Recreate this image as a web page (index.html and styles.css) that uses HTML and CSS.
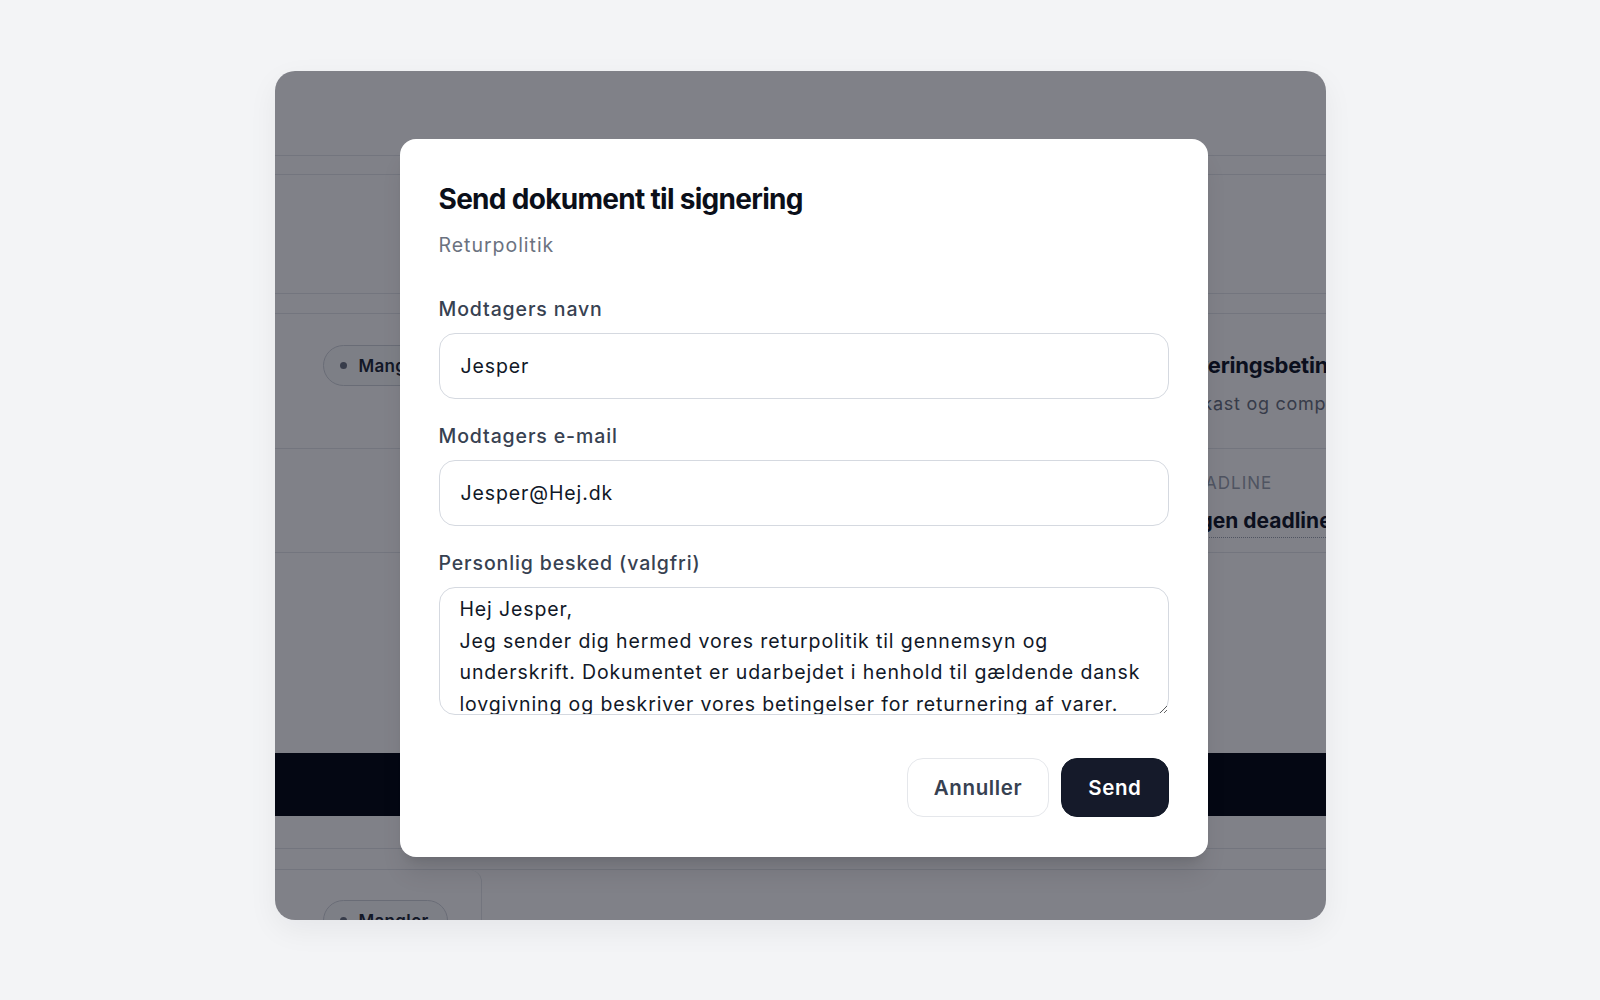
FILE: index.html
```html
<!DOCTYPE html>
<html lang="da">
<head>
  <meta charset="UTF-8" />
  <meta name="viewport" content="width=device-width, initial-scale=1.0"/>
  <title>Send dokument til signering</title>
  <link rel="stylesheet" href="styles.css">
</head>
<body>
  <div class="frame">
    <!-- siden bag dialogen -->
    <div class="app">
      <div class="app-head"></div>
      <div class="app-tabs"></div>
      <div class="app-gap"></div>
      <div class="app-strip"></div>

      <section class="doc-row">
        <span class="pill"><i class="dot"></i>Mangler</span>
        <div class="doc-info">
          <h3>Leveringsbetingelser</h3>
          <p>Udkast og compliance</p>
        </div>
      </section>

      <section class="doc-meta">
        <div class="meta-col">
          <span class="meta-label">Deadline</span>
          <span class="meta-value">Ingen deadline</span>
        </div>
      </section>

      <div class="app-space"></div>
      <div class="app-bar"></div>
      <div class="app-space small"></div>
      <div class="app-strip thin"></div>

      <div class="doc-card">
        <span class="pill"><i class="dot"></i>Mangler</span>
      </div>
    </div>

    <!-- MODAL -->
    <div class="overlay">
      <form class="dialog" onsubmit="return false">
        <h2>Send dokument til signering</h2>
        <p class="sub">Returpolitik</p>

        <label class="field">
          <span>Modtagers navn</span>
          <input type="text" value="Jesper">
        </label>

        <label class="field">
          <span>Modtagers e-mail</span>
          <input type="email" value="Jesper@Hej.dk">
        </label>

        <label class="field">
          <span>Personlig besked (valgfri)</span>
          <textarea>Hej Jesper,
Jeg sender dig hermed vores returpolitik til gennemsyn og underskrift. Dokumentet er udarbejdet i henhold til gældende dansk lovgivning og beskriver vores betingelser for returnering af varer.

Med venlig hilsen</textarea>
        </label>

        <div class="actions">
          <button type="button" class="btn ghost">Annuller</button>
          <button type="submit" class="btn dark">Send</button>
        </div>
      </form>
    </div>
  </div>
</body>
</html>
```

FILE: styles.css
```css
* {
  box-sizing: border-box;
}

body {
  margin: 0;
  height: 100vh;
  background: #f3f4f6;
  font-family: Inter, "Noto Sans", sans-serif;
  color: #111827;
}

.frame {
  position: relative;
  width: 1051px;
  height: 849px;
  margin: 71px auto 0;
  border-radius: 20px;
  overflow: hidden;
  background: #fff;
  box-shadow: 0 10px 30px rgba(15, 23, 42, 0.06);
}

/* siden under overlayet */
.app-head {
  height: 85px;
  border-bottom: 1px solid #e5e7eb;
}

.app-tabs {
  height: 19px;
  border-bottom: 1px solid #e5e7eb;
}

.app-gap {
  height: 119px;
  border-bottom: 1px solid #e5e7eb;
}

.app-strip {
  height: 20px;
  border-bottom: 1px solid #e5e7eb;
}

.app-strip.thin {
  height: 21px;
}

.doc-row {
  height: 135px;
  display: grid;
  grid-template-columns: 848px 1fr;
  padding: 31px 0 0 48px;
  border-bottom: 1px solid #e5e7eb;
}

.doc-info h3 {
  margin: 7px 0 0;
  font-size: 22px;
  font-weight: 700;
  letter-spacing: -0.01em;
  white-space: nowrap;
  color: #111827;
}

.doc-info p {
  margin: 15px 0 0 6px;
  font-size: 18px;
  letter-spacing: 0.04em;
  color: #6b7280;
  white-space: nowrap;
}

.doc-meta {
  height: 104px;
  padding: 24px 0 0 906px;
  border-bottom: 1px solid #e5e7eb;
}

.meta-col {
  display: flex;
  flex-direction: column;
  gap: 15px;
  white-space: nowrap;
}

.meta-label {
  font-size: 17px;
  text-transform: uppercase;
  letter-spacing: 0.06em;
  color: #9ca3af;
}

.meta-value {
  font-size: 21px;
  font-weight: 700;
  padding-bottom: 4px;
  border-bottom: 1px dotted #9ca3af;
}

.app-space {
  height: 200px;
}

.app-space.small {
  height: 33px;
  border-bottom: 1px solid #e5e7eb;
}

.app-bar {
  height: 63px;
  background: #030712;
}

.doc-card {
  width: 207px;
  height: 60px;
  padding: 30px 0 0 48px;
  border-right: 1px solid #e5e7eb;
  border-top-right-radius: 12px;
}

.pill {
  display: inline-flex;
  align-items: center;
  gap: 12px;
  height: 41px;
  padding: 0 18px 0 16px;
  border: 1px solid #d1d5db;
  border-radius: 999px;
  background: #f9fafb;
  font-size: 17px;
  font-weight: 600;
  letter-spacing: 0.02em;
  color: #1f2937;
  white-space: nowrap;
}

.dot {
  width: 7px;
  height: 7px;
  border-radius: 50%;
  background: #6b7280;
}

/* MODAL */
.overlay {
  position: absolute;
  inset: 0;
  padding: 68px 0 0 125px;
  background: rgba(5, 7, 22, 0.51);
}

.dialog {
  width: 808px;
  padding: 40px 39px 40px;
  border-radius: 16px;
  background: #fff;
  box-shadow: 0 20px 25px -5px rgba(0, 0, 0, 0.1), 0 8px 10px -6px rgba(0, 0, 0, 0.1);
}

.dialog h2 {
  margin: 0;
  font-size: 28px;
  line-height: 41px;
  font-weight: 700;
  letter-spacing: -0.025em;
  color: #0b0f19;
}

.sub {
  margin: 11px 0 0;
  font-size: 19.5px;
  line-height: 28px;
  letter-spacing: 0.05em;
  color: #6b7280;
}

.field {
  display: flex;
  flex-direction: column;
  gap: 10px;
  margin-top: 23px;
}

.sub + .field {
  margin-top: 36px;
}

.field span {
  font-size: 19.5px;
  line-height: 28px;
  font-weight: 500;
  letter-spacing: 0.045em;
  color: #374151;
}

.field input,
.field textarea {
  width: 100%;
  border: 1px solid #d5d9e0;
  border-radius: 16px;
  background: #fff;
  font-family: inherit;
  font-size: 19.5px;
  letter-spacing: 0.045em;
  color: #111827;
  outline: none;
}

.field input {
  height: 66px;
  padding: 0 21px;
}

.field textarea {
  height: 128px;
  padding: 6px 20px;
  line-height: 31.5px;
  overflow: hidden;
}

.actions {
  display: flex;
  justify-content: flex-end;
  gap: 12px;
  margin-top: 43px;
}

.btn {
  height: 59px;
  padding: 0 26px;
  border-radius: 16px;
  font-family: inherit;
  font-size: 20.5px;
  font-weight: 600;
  letter-spacing: 0.03em;
  cursor: pointer;
}

.btn.ghost {
  border: 1px solid #e5e7eb;
  background: #fff;
  color: #374151;
}

.btn.dark {
  border: 1px solid #111827;
  background: #151a2a;
  color: #fff;
}
```
